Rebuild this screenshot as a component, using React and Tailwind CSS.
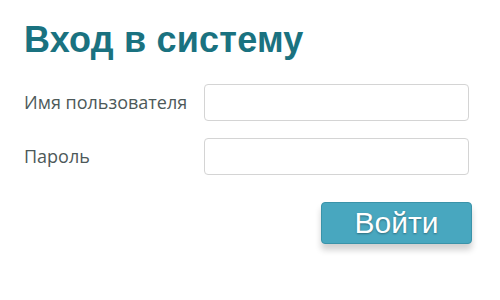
export default function App() {
  return (
    <div className="h-[300px] w-[500px] bg-white pl-6 pt-[20px]">
      <h1 className="font-['Liberation_Sans',Arial,sans-serif] text-[36px] font-bold leading-[40px] tracking-[0.2px] text-[#1a7280]">
        Вход в систему
      </h1>

      <form className="mt-[24px] grid w-[446px] grid-cols-[180px_1fr] items-center gap-x-0 gap-y-[17px]">
        <label className="font-['Open_Sans',sans-serif] text-[18px] text-[#4d5959]">
          Имя пользователя
        </label>
        <input
          type="text"
          className="h-[37px] w-[265px] rounded-[4px] border border-[#d4d4d4] bg-white outline-none"
        />
        <label className="font-['Open_Sans',sans-serif] text-[18px] text-[#4d5959]">Пароль</label>
        <input
          type="password"
          className="h-[37px] w-[265px] rounded-[4px] border border-[#d4d4d4] bg-white outline-none"
        />
      </form>

      <div className="mt-[27px] flex w-[448px] justify-end">
        <button
          type="button"
          className="h-[42px] w-[151px] rounded-[4px] border border-[#3a93a9] bg-[#48a7bf] font-['Liberation_Sans',Arial,sans-serif] text-[30px] leading-none text-white shadow-[0_6px_6px_rgba(0,0,0,0.18)] [text-shadow:0_1px_2px_rgba(0,0,0,0.35)]"
        >
          Войти
        </button>
      </div>
    </div>
  );
}
